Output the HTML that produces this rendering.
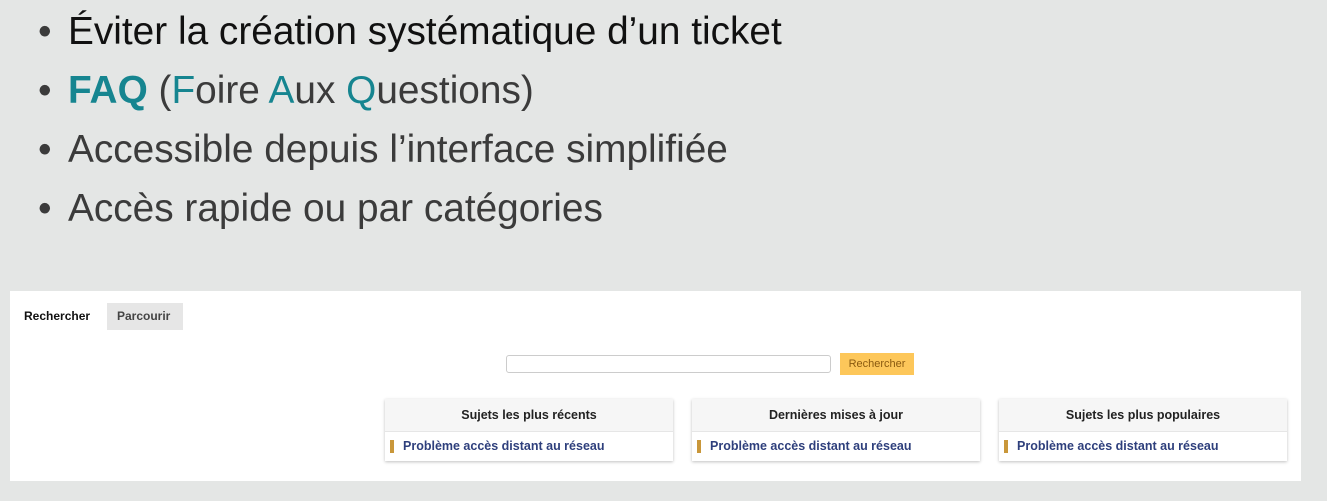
<!DOCTYPE html>
<html><head><meta charset="utf-8"><style>
body{margin:0;width:1327px;height:501px;background:#e4e6e5;position:relative;overflow:hidden;font-family:"Liberation Sans",sans-serif}
.l{position:absolute;left:38px;font-size:38.8px;color:#3b3b3b;white-space:nowrap;line-height:44px}
.l b.d{position:absolute;left:0}
.l span.t{position:absolute;left:30px}
.teal{color:#168590}
.panel{position:absolute;left:10px;top:291px;width:1291px;height:190px;background:#fff}
.tab{position:absolute;top:12px;height:27px;line-height:27px;font-size:12px;font-weight:bold;padding:0 10px}
.inp{position:absolute;left:496px;top:64px;width:323px;height:16px;border:1px solid #ccc;border-radius:3px}
.btn{position:absolute;left:830px;top:62px;width:74px;height:22px;background:#fdc75a;color:#8a5a10;font-size:11px;line-height:22px;text-align:center}
.card{position:absolute;top:108px;width:288px;height:62px;background:#fff;box-shadow:0 1px 3px rgba(0,0,0,.25)}
.card .h{height:32px;background:#f6f6f6;border-bottom:1px solid #e6e6e6;text-align:center;font-size:12.5px;font-weight:bold;line-height:32px;color:#222}
.card .b{height:29px;line-height:29px;font-size:12.5px;font-weight:bold;color:#2e3f7c;padding-left:18px;position:relative}
.card .b:before{content:"";position:absolute;left:5px;top:8px;width:4px;height:13px;background:#c9973a}
</style></head><body>
<div class="l" style="top:10px"><b class="d" style="font-weight:normal">•</b><span class="t" style="color:#111">Éviter la création systématique d’un ticket</span></div>
<div class="l" style="top:69px"><b class="d" style="font-weight:normal">•</b><span class="t"><b class="teal">FAQ</b> (<span class="teal">F</span>oire <span class="teal">A</span>ux <span class="teal">Q</span>uestions)</span></div>
<div class="l" style="top:128px"><b class="d" style="font-weight:normal">•</b><span class="t">Accessible depuis l’interface simplifiée</span></div>
<div class="l" style="top:187px"><b class="d" style="font-weight:normal">•</b><span class="t">Accès rapide ou par catégories</span></div>
<div class="panel">
<div class="tab" style="left:4px;color:#111">Rechercher</div>
<div class="tab" style="left:97px;background:#e6e6e6;color:#444;width:56px">Parcourir</div>
<div class="inp"></div>
<div class="btn">Rechercher</div>
<div class="card" style="left:375px"><div class="h">Sujets les plus récents</div><div class="b">Problème accès distant au réseau</div></div>
<div class="card" style="left:682px"><div class="h">Dernières mises à jour</div><div class="b">Problème accès distant au réseau</div></div>
<div class="card" style="left:989px"><div class="h">Sujets les plus populaires</div><div class="b">Problème accès distant au réseau</div></div>
</div>
</body></html>
